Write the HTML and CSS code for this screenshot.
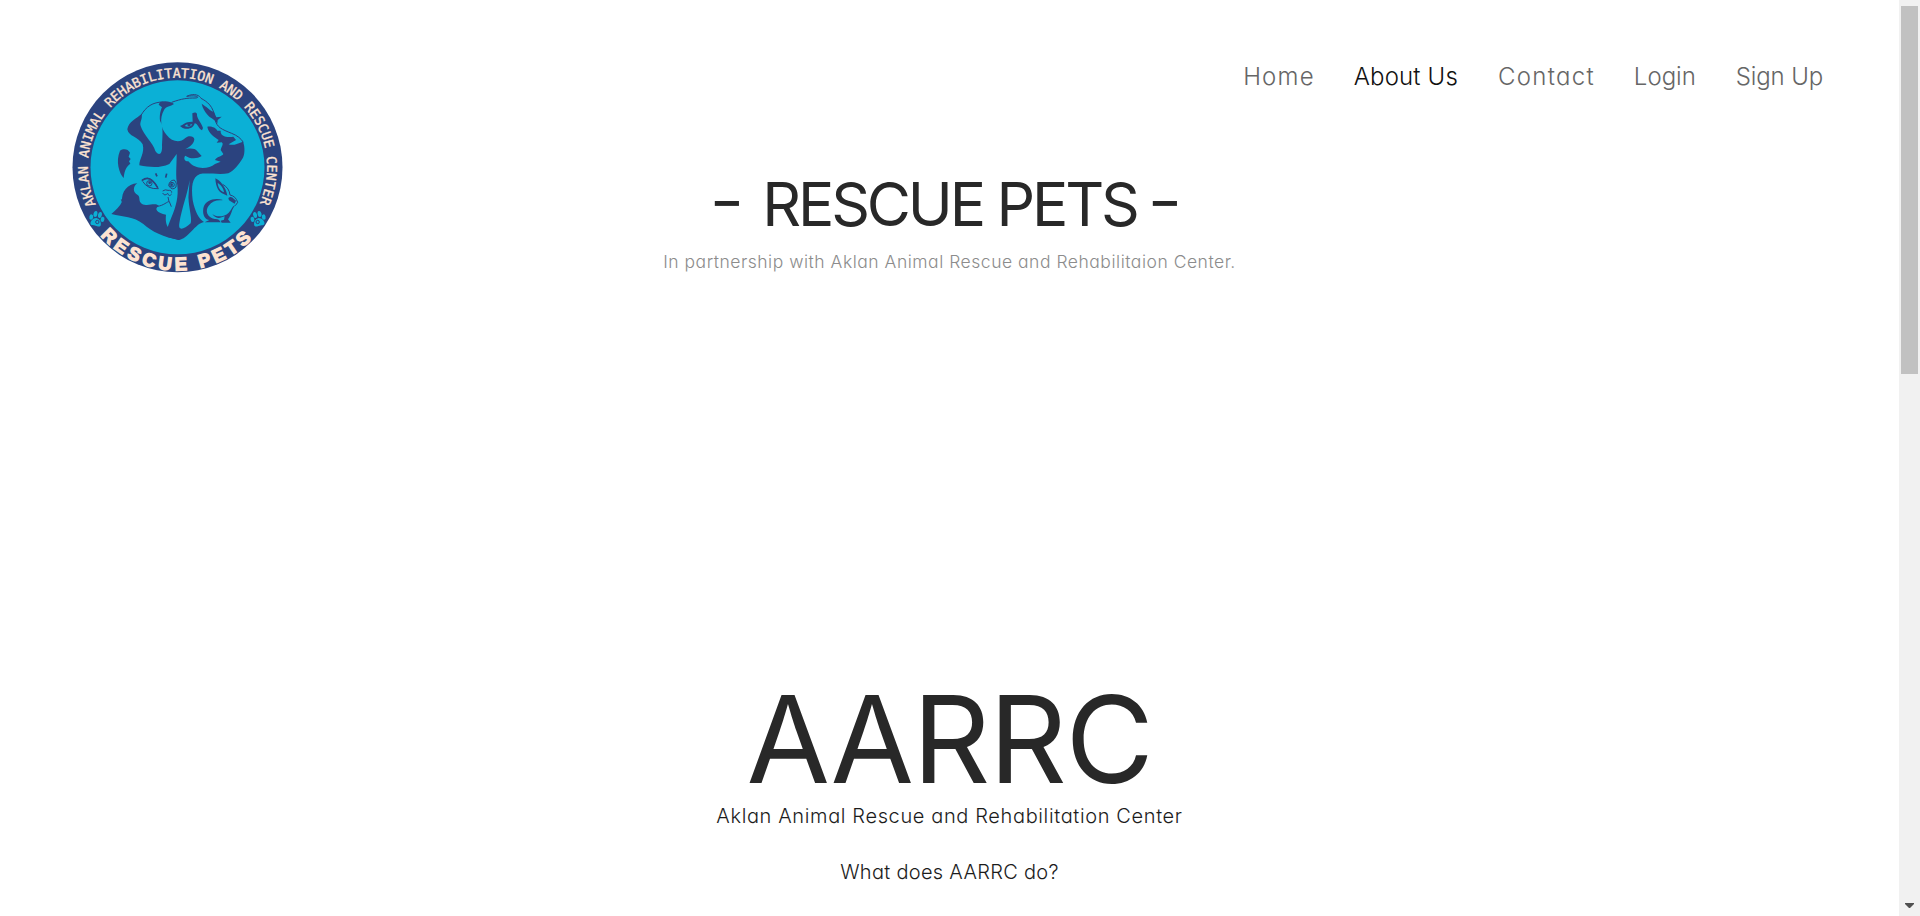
FILE: index.html
```html
<!DOCTYPE html>
<html lang="en">
<head>
<meta charset="utf-8">
<title>Rescue Pets</title>
<link rel="stylesheet" href="styles.css">
</head>
<body>
<div class="page">
  <header class="header">
    <svg class="logo" viewBox="0 0 720 705" role="img" aria-label="Rescue Pets logo">
      <defs>
        <path id="arc-top" d="M107.700 463.600 A269 269 0 1 1 597.300 463.600"/>
        <path id="arc-bottom" d="M121.500 557 A308 308 0 0 0 580 561"/>
        <g id="paw">
          <ellipse cx="-15" cy="-3" rx="5" ry="7"/><ellipse cx="-6" cy="-13" rx="5" ry="8"/>
          <ellipse cx="6" cy="-13" rx="5" ry="8"/><ellipse cx="15" cy="-3" rx="5" ry="7"/>
          <path d="M0 -3 C9 -3 16 9 13 15 C8 20 4 15 0 17 C-4 15 -8 20 -13 15 C-16 9 -9 -3 0 -3Z"/>
        </g>
      </defs>
      <circle class="navy" cx="352.500" cy="352" r="315"/>
      <circle class="teal" cx="352.500" cy="352" r="261"/>
      <text class="ring-text"><textPath href="#arc-top" textLength="1070">AKLAN ANIMAL REHABILITATION AND RESCUE CENTER</textPath></text>
      <text class="ring-name"><textPath href="#arc-bottom" textLength="510">RESCUE PETS</textPath></text>
      <use href="#paw" class="teal" transform="translate(110 508) rotate(12) scale(1.150)"/>
      <use href="#paw" class="teal" transform="translate(595 508) rotate(-12) scale(1.150)"/>
      <circle class="paw-line" cx="112" cy="516" r="5"/>
      <circle class="paw-line" cx="593" cy="516" r="5"/>
      <g transform="translate(120 120)">
        <!-- dog -->
        <path class="navy" d="M180 36 C195 32 212 34 222 42 C212 50 198 48 192 60 C178 85 182 115 200 135 C215 155 240 160 255 145 C265 135 282 138 283 148 C282 162 268 172 255 178 C262 176 285 172 292 184 L305 198 C290 208 268 206 256 197 C250 203 253 215 265 214 C285 240 325 238 345 222 L362 215 L345 210 C350 200 365 200 370 192 L362 180 C365 168 372 162 365 157 L350 158 L356 150 C345 142 325 130 322 110 C334 108 348 113 352 122 L362 122 C360 138 380 144 400 140 L408 150 L386 163 C400 168 415 160 429 155 C436 172 434 195 428 205 C415 225 405 240 385 250 C360 255 320 248 300 252 C275 262 274 290 278 330 C285 365 295 385 312 396 C285 400 265 448 235 450 L200 440 C198 420 205 405 215 380 C228 350 236 320 232 285 C226 260 230 230 230 192 L208 222 C180 235 150 232 118 226 C118 205 135 190 128 163 C115 140 85 140 82 118 C85 95 110 85 125 72 C128 90 118 95 122 108 C130 135 160 160 166 183 C176 198 188 195 186 165 C188 130 190 110 180 92 C178 75 182 60 186 52 L176 44Z"/>
        <path class="teal" d="M269 270 C262 315 246 350 238 400 C234 425 252 418 272 400 C278 385 262 340 266 310Z"/>
        <path class="line" d="M123 76 C138 50 158 36 190 36 M215 37 C245 26 262 24 285 24 C300 24 295 14 260 19 C285 7 300 18 303 25 C320 34 342 48 345 88 C350 112 365 118 395 130 Q420 140 430 157"/>
        <path class="navy" d="M305 41 C320 50 330 62 342 66 L349 82 L365 80 L353 90 L352 101 C342 86 330 84 323 75 C314 65 308 54 305 41Z"/>
        <path class="navy" d="M277 70 C284 66 289 67 291 72 C289 84 304 98 309 114 L306 121 C295 116 293 100 284 100 C281 113 266 121 248 114 L240 108 C250 104 256 94 278 95Z"/>
        <path class="teal" d="M254 108 Q265 97 277 104 Q268 114 254 108Z"/>
        <circle class="navy" cx="267" cy="104" r="5"/>
        <!-- cat -->
        <path class="navy" d="M60 182 C70 175 84 176 90 188 L86 200 92 207 87 214 91 221 C80 230 74 238 71 264 C58 250 46 215 60 182Z"/>
        <path class="navy" d="M34 372 C48 360 60 348 66 335 C64 305 82 282 112 280 C98 290 98 307 113 315 C122 320 114 333 125 341 C145 352 163 335 177 348 C160 356 172 370 198 374 C196 390 198 405 206 414 L240 450 C190 442 155 425 130 402 C100 378 70 382 34 372Z"/>
        <path class="line" d="M64 328 Q67 343 77 353 M171 349 C190 348 203 333 208 335 L214 350 M207 335 L204 321 M188 303 Q196 297 204 301 Q216 300 215 308 M188 309 Q194 320 203 310 Q207 322 215 312"/>
        <path class="line" d="M125 272 Q143 258 157 272 Q169 283 175 296 Q142 298 128 274 M206 287 Q208 271 223 270 Q232 278 228 291 Q217 304 206 287"/>
        <path class="thick" d="M126 271 Q143 259 157 272 Q165 279 173 293"/>
        <circle class="line" cx="148" cy="280" r="8"/><circle class="line" cx="216" cy="284" r="7"/>
        <circle class="navy" cx="149" cy="278" r="4"/><circle class="navy" cx="215" cy="284" r="4"/>
        <path class="thick" d="M167 250 L171 259 M200 251 L197 263"/>
        <!-- rabbit -->
        <path class="navy" fill-rule="evenodd" d="M346 265 C360 270 378 292 382 317 L371 312 C358 309 347 293 346 265Z M353 279 C354 293 362 304 372 307 C371 296 363 284 353 279Z"/>
        <path class="line" d="M368 283 Q388 294 390 315 Q407 318 413 337 L406 347"/>
        <path class="navy" d="M385 324 Q393 316 402 327 L408 332 404 341 394 335 387 331Z M367 329 C346 323 315 328 310 355 C306 378 318 390 328 390 L314 397 L362 397 Q358 386 344 387 C322 382 314 363 326 347 C336 334 350 329 367 331Z"/>
        <path class="navy" d="M406 346 C394 350 396 360 386 368 C372 382 348 382 337 372 C350 390 362 383 374 379 L372 389 362 392 365 398 392 398 384 388 C396 373 394 358 406 346Z"/>
      </g>
    </svg>
    <nav class="nav">
      <a class="link home">Home</a>
      <a class="link about active">About Us</a>
      <a class="link contact">Contact</a>
      <a class="link login">Login</a>
      <a class="link signup">Sign Up</a>
    </nav>
  </header>
  <section class="hero">
    <h1 class="title"><span class="dash">-</span><span class="name">RESCUE PETS</span><span class="dash">-</span></h1>
    <p class="subtitle">In partnership with Aklan Animal Rescue and Rehabilitaion Center.</p>
  </section>
  <section class="intro">
    <h2 class="acronym">AARRC</h2>
    <p class="full-name">Aklan Animal Rescue and Rehabilitation Center</p>
    <p class="question">What does AARRC do?</p>
  </section>
</div>
<div class="scrollbar">
  <div class="thumb"></div>
  <svg class="arrow" viewBox="0 0 9 5"><path d="M0 0H9V1L5 5H4L0 1Z"/></svg>
</div>
</body>
</html>
```
FILE: styles.css
```css
* { box-sizing: border-box; }
body {
  margin: 0;
  height: 916px;
  display: flex;
  overflow: hidden;
  background: #fff;
  color: #282828;
  font-family: Inter, "Open Sans", sans-serif;
  font-feature-settings: "cv11", "calt" 0;
  font-weight: 300;
}
h1, h2, p { margin: 0; font-weight: 400; white-space: nowrap; }
.page { width: 1899px; height: 916px; display: flex; flex-direction: column; }
.header { height: 160px; display: flex; justify-content: space-between; padding: 50px 76px 0 60px; }
.logo { width: 240px; height: 235px; flex: none; }
.navy { fill: #2b437f; }
.teal { fill: #0bb0d6; }
.line { fill: none; stroke: #2b437f; stroke-width: 3; }
.thick { fill: none; stroke: #2b437f; stroke-width: 5; }
.paw-line { fill: none; stroke: #2b437f; stroke-width: 3; }
.ring-text { font: 40px "DejaVu Sans Mono", monospace; fill: #fde3d2; stroke: #fde3d2; stroke-width: 1; }
.ring-name { font: bold 55px "Liberation Sans", sans-serif; fill: #fde3d2; stroke: #fde3d2; stroke-width: 4; }
.nav { display: flex; gap: 40px; font-size: 24px; line-height: 53px; }
.link { color: #666; white-space: nowrap; }
.home { letter-spacing: 1.200px; margin-right: -1px; }
.about { letter-spacing: 0.150px; }
.contact { letter-spacing: 1.300px; margin-right: -1px; }
.signup { letter-spacing: -0.150px; }
.active { color: #111; }
.hero { height: 510px; display: flex; flex-direction: column; align-items: center; }
.title { display: flex; height: 88px; padding-right: 7px; font-size: 60.500px; line-height: 88px; }
.dash { transform: translateY(-4px) scaleX(1.250); }
.name { letter-spacing: -3.200px; margin: 0 14px 0 21px; }
.subtitle { font-size: 17.500px; line-height: 28px; letter-spacing: 0.520px; color: #8c8c8c; font-weight: 300; }
.intro { flex: 1; display: flex; flex-direction: column; align-items: center; }
.acronym { font-size: 121px; line-height: 138px; height: 132px; letter-spacing: -1.400px; }
.full-name { font-size: 20px; line-height: 28px; letter-spacing: 0.630px; color: #1c1c1c; font-weight: 300; }
.question { font-size: 20px; line-height: 28px; letter-spacing: 0.300px; margin-top: 28px; color: #1c1c1c; font-weight: 300; }
.scrollbar { width: 21px; height: 916px; background: #f1f1f1; display: flex; flex-direction: column; justify-content: space-between; padding: 6px 2px 8px; }
.thumb { width: 17px; height: 368px; background: #c1c1c1; }
.arrow { width: 9px; height: 5px; margin-left: 4px; fill: #505050; }
```
